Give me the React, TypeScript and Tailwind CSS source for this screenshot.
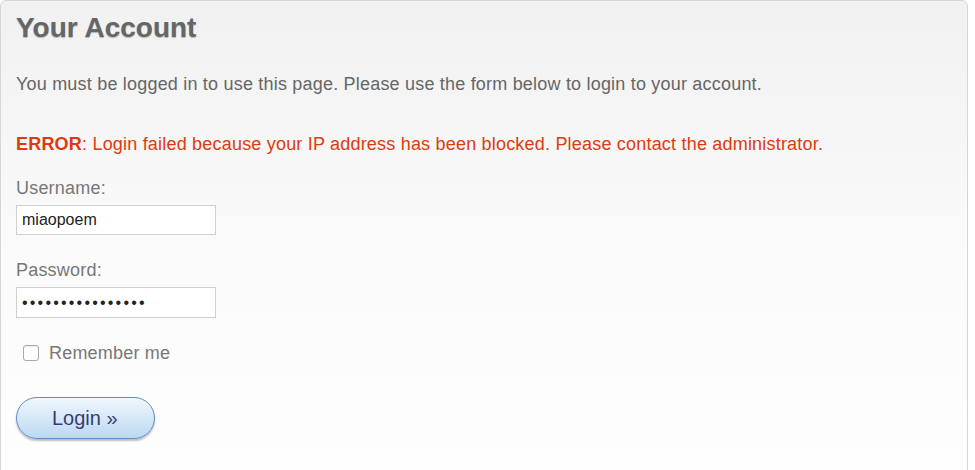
export default function App() {
  return (
    <div className="w-[975px] h-[470px] bg-white overflow-hidden font-['Liberation_Sans',Arial,sans-serif]">
      <div className="w-[968px] h-[480px] border border-[#d6d6d6] rounded-t-[6px] bg-gradient-to-b from-[#f1f1f1] via-[#fafafa] to-[#fefefe] px-[15px]">
        {/* Heading */}
        <h1 className="pt-[11px] text-[28px] leading-[32px] font-bold text-[#666] [text-shadow:0_1px_1px_rgba(0,0,0,0.25)]">
          Your Account
        </h1>

        <p className="mt-[29px] text-[18px] leading-[22px] tracking-[0.2px] text-[#666]">
          You must be logged in to use this page. Please use the form below to login to your account.
        </p>

        <p className="mt-[38px] text-[18px] leading-[22px] tracking-[0.2px] text-[#de3a0e]">
          <span className="font-bold">ERROR</span>: Login failed because your IP address has been blocked. Please contact the administrator.
        </p>

        {/* Form */}
        <div className="mt-[22px] flex flex-col">
          <label className="text-[18px] leading-[22px] tracking-[0.2px] text-[#777]">Username:</label>
          <input
            readOnly
            value="miaopoem"
            className="mt-[6px] w-[200px] h-[30px] border border-[#cfcfcf] bg-white px-[5px] text-[16px] text-[#222] outline-none"
          />

          <label className="mt-[24px] text-[18px] leading-[22px] tracking-[0.2px] text-[#777]">Password:</label>
          <input
            readOnly
            type="password"
            value="miaopoemmiaopoem"
            className="mt-[6px] w-[200px] h-[31px] border border-[#cfcfcf] bg-white px-[5px] text-[16px] tracking-[2.2px] text-[#222] outline-none"
          />

          <label className="mt-[24px] ml-[7px] flex items-center gap-[10px] text-[18px] leading-[22px] tracking-[0.2px] text-[#777]">
            <span className="w-[16px] h-[16px] rounded-[3px] border border-[#a9a9a9] bg-white shadow-[inset_0_1px_1px_rgba(0,0,0,0.08)]" />
            Remember me
          </label>

          <button className="mt-[33px] w-[139px] h-[42px] rounded-full border border-[#5c8fc8] bg-gradient-to-b from-[#f0f7fd] to-[#bcd9f1] shadow-[0_2px_2px_rgba(0,0,0,0.25)] text-[20px] text-[#3b3b72] text-left pl-[35px]">
            Login »
          </button>
        </div>
      </div>
    </div>
  );
}
